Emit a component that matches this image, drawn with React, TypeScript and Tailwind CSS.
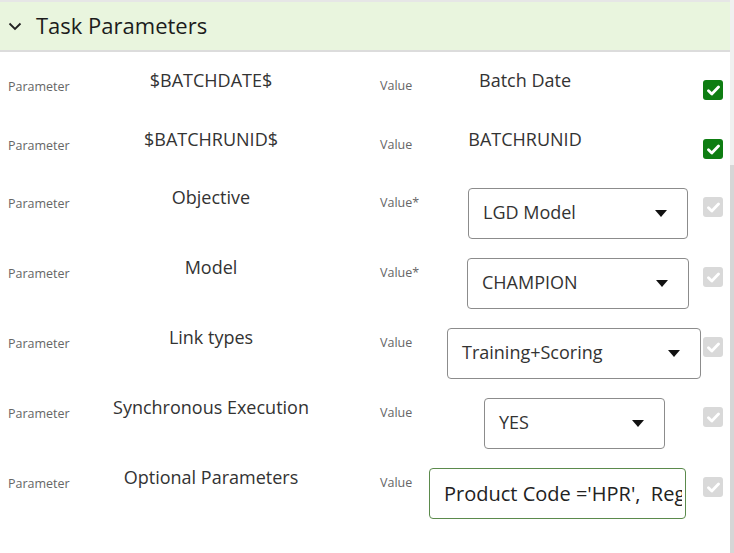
import React from 'react';

type Row = {
  name: string;
  required?: boolean;
  kind: 'text' | 'select' | 'input';
  value: string;
  checked?: boolean;
  ml?: string; // control offset inside value area
  w?: string;
};

const rows: Row[] = [
  { name: '$BATCHDATE$', kind: 'text', value: 'Batch Date', checked: true },
  { name: '$BATCHRUNID$', kind: 'text', value: 'BATCHRUNID', checked: true },
  { name: 'Objective', required: true, kind: 'select', value: 'LGD Model', ml: 'ml-[48px]', w: 'w-[220px]' },
  { name: 'Model', required: true, kind: 'select', value: 'CHAMPION', ml: 'ml-[47px]', w: 'w-[222px]' },
  { name: 'Link types', kind: 'select', value: 'Training+Scoring', ml: 'ml-[27px]', w: 'w-[254px]' },
  { name: 'Synchronous Execution', kind: 'select', value: 'YES', ml: 'ml-[64px]', w: 'w-[181px]' },
  { name: 'Optional Parameters', kind: 'input', value: "Product Code ='HPR',  Region Code ='EMEA'", ml: 'ml-[9px]', w: 'w-[257px]' },
];

const Check = ({ on }: { on?: boolean }) => (
  <div
    className={`w-[20px] h-[20px] rounded-[3px] flex items-center justify-center ${
      on ? 'bg-[#0e7d12]' : 'bg-[#d9d9d9]'
    }`}
  >
    <svg width="13" height="11" viewBox="0 0 13 11">
      <path d="M1.5 5.8 L4.8 9 L11.5 2" fill="none" stroke="#fff" strokeWidth="2.8" strokeLinecap="round" strokeLinejoin="round" />
    </svg>
  </div>
);

const Caret = () => (
  <svg width="12" height="7" viewBox="0 0 12 7" className="shrink-0">
    <path d="M0 0 H12 L6 7 Z" fill="#111" />
  </svg>
);

const ParamRow = ({ row, h }: { row: Row; h: string }) => (
  <div className={`flex items-start ${h}`}>
    <div className="w-[92px] pl-[8px] mt-[11px] text-[12.5px] leading-[16px] text-[#666]">Parameter</div>
    <div className="w-[238px] text-center text-[18px] leading-[24px] text-[#333]">{row.name}</div>
    <div className="w-[90px] pl-[50px] mt-[10px] text-[12.5px] leading-[16px] text-[#666]">
      {row.required ? 'Value*' : 'Value'}
    </div>
    <div className="w-[283px] shrink-0">
      {row.kind === 'text' && (
        <div className="w-[210px] text-center text-[18px] leading-[24px] text-[#333]">{row.value}</div>
      )}
      {row.kind === 'select' && (
        <div
          className={`${row.ml} ${row.w} mt-[3px] h-[51px] rounded-[4px] border border-[#8c8c8c] bg-white flex items-center justify-between pl-[14px] pr-[20px]`}
        >
          <span className="text-[18px] text-[#333] leading-[24px] -mt-[4px]">{row.value}</span>
          <Caret />
        </div>
      )}
      {row.kind === 'input' && (
        <input
          readOnly
          value={row.value}
          className={`${row.ml} ${row.w} block mt-[3px] h-[51px] rounded-[4px] border border-[#5b8a4c] bg-white pl-[14px] pr-[3px] text-[20px] text-[#222] outline-none`}
        />
      )}
    </div>
    <div className="mt-[12px]">
      <Check on={row.checked} />
    </div>
  </div>
);

export default function App() {
  return (
    <div
      className="w-[734px] h-[553px] bg-white flex overflow-hidden"
      style={{ fontFamily: '"Open Sans", "Noto Sans", sans-serif' }}
    >
      <div className="flex-1 flex flex-col">
        <div className="h-[52px] border-t-[2px] border-t-[#e6e6e6] border-b-[2px] border-b-[#dcdcdc] bg-[#e9f5de] flex items-center">
          <svg width="14" height="9" viewBox="0 0 14 9" className="ml-[8px]">
            <path d="M1.5 1.5 L7 7 L12.5 1.5" fill="none" stroke="#222" strokeWidth="1.8" />
          </svg>
          <span className="ml-[14px] text-[22px] leading-[28px] text-[#1c1c1c] -mt-[2px]">Task Parameters</span>
        </div>
        <div className="pt-[16px]">
          <ParamRow row={rows[0]} h="h-[59px]" />
          <ParamRow row={rows[1]} h="h-[58px]" />
          {rows.slice(2).map((r) => (
            <ParamRow key={r.name} row={r} h="h-[70px]" />
          ))}
        </div>
      </div>
      <div className="w-[4px] flex flex-col">
        <div className="h-[165px] bg-[#f0f0f0]" />
        <div className="flex-1 bg-[#d6d6d6]" />
      </div>
    </div>
  );
}
